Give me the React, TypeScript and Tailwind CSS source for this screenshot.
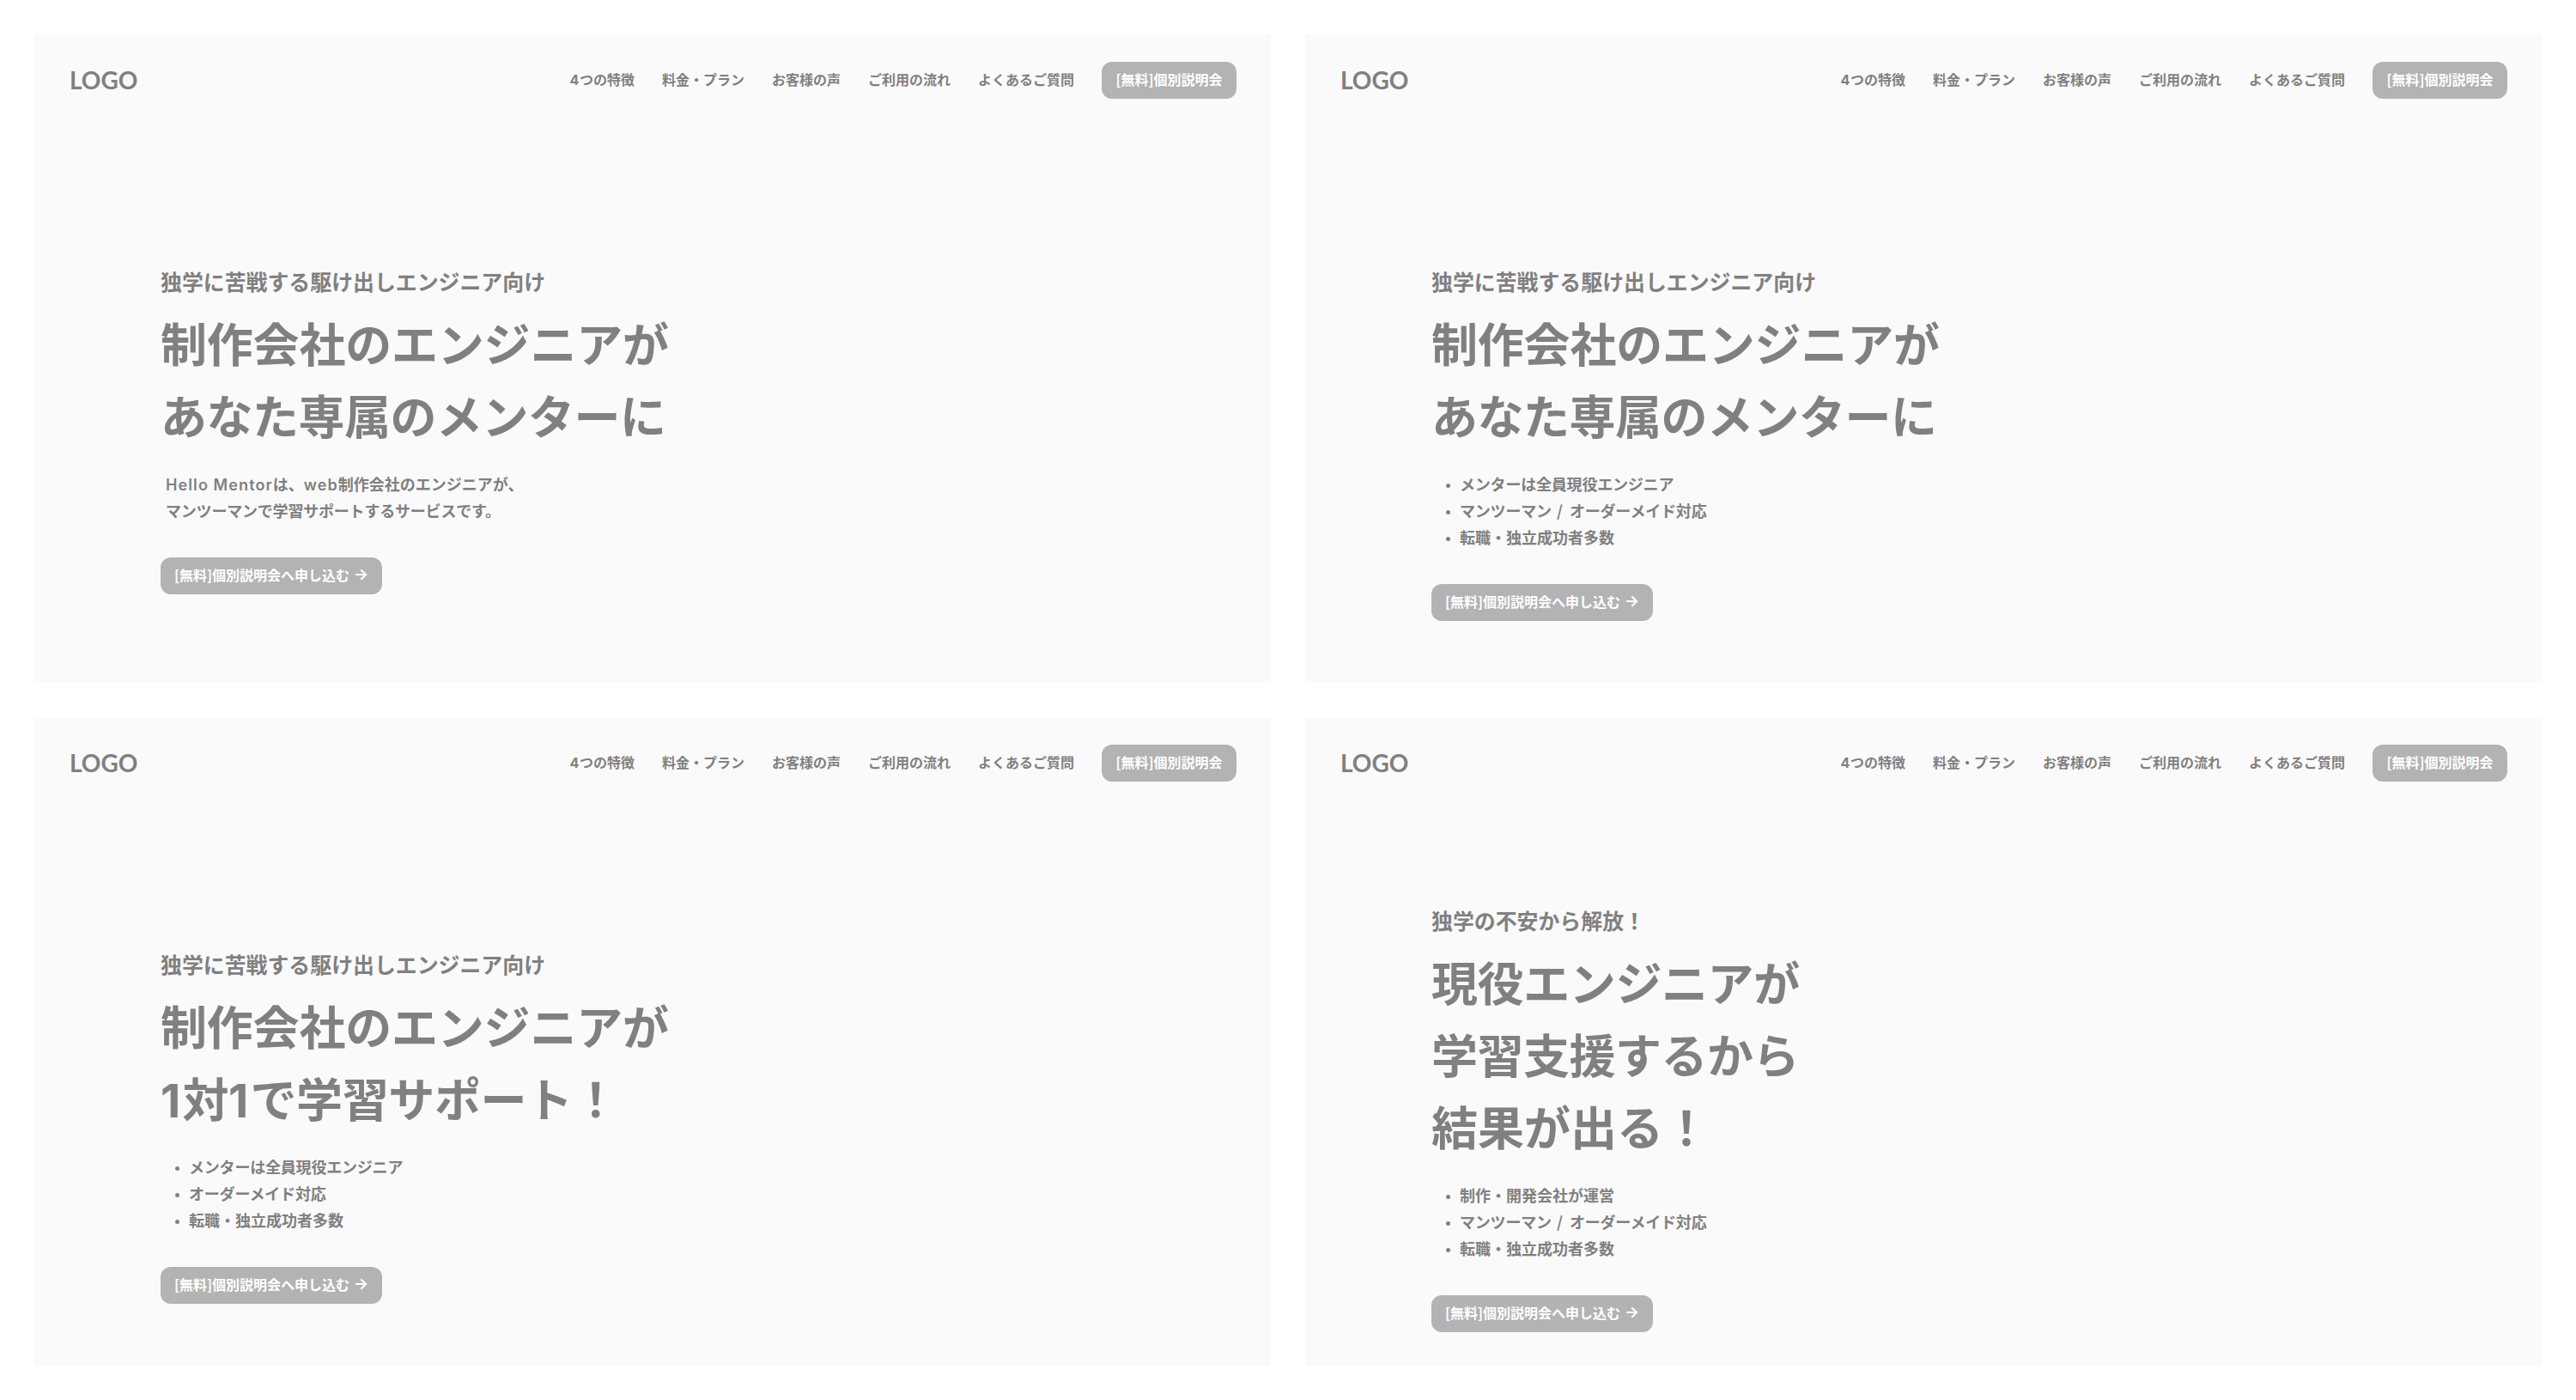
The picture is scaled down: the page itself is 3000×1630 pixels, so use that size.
import { Fragment } from 'react';

interface Line {
    text: string;
    tracking?: string;
}

interface Hero {
    subtitle: string;
    title: Line[];
    lead?: Line[];
    points?: Line[];
    top: string;
    padding: string;
}

const NAV_ITEMS = ['4つの特徴', '料金・プラン', 'お客様の声', 'ご利用の流れ', 'よくあるご質問'];

const HEROES: Hero[] = [
    {
        subtitle: '独学に苦戦する駆け出しエンジニア向け',
        title: [
            { text: '制作会社のエンジニアが', tracking: 'tracking-[-0.2px]' },
            { text: 'あなた専属のメンターに', tracking: 'tracking-[-0.5px]' },
        ],
        lead: [
            { text: 'Hello Mentorは、web制作会社のエンジニアが、' },
            {
                text: 'マンツーマンで学習サポートするサービスです。',
                tracking: 'tracking-[-0.2px]',
            },
        ],
        top: 'pt-8',
        padding: 'pt-[194px]',
    },
    {
        subtitle: '独学に苦戦する駆け出しエンジニア向け',
        title: [
            { text: '制作会社のエンジニアが', tracking: 'tracking-[-0.2px]' },
            { text: 'あなた専属のメンターに', tracking: 'tracking-[-0.5px]' },
        ],
        points: [
            { text: 'メンターは全員現役エンジニア', tracking: 'tracking-[-0.2px]' },
            { text: 'マンツーマン / オーダーメイド対応', tracking: 'tracking-[-0.2px]' },
            { text: '転職・独立成功者多数' },
        ],
        top: 'pt-8',
        padding: 'pt-[194px]',
    },
    {
        subtitle: '独学に苦戦する駆け出しエンジニア向け',
        title: [
            { text: '制作会社のエンジニアが', tracking: 'tracking-[-0.2px]' },
            { text: '1対1で学習サポート！', tracking: 'tracking-[-0.4px]' },
        ],
        points: [
            { text: 'メンターは全員現役エンジニア', tracking: 'tracking-[-0.2px]' },
            { text: 'オーダーメイド対応', tracking: 'tracking-[-0.2px]' },
            { text: '転職・独立成功者多数' },
        ],
        top: 'pt-[31px]',
        padding: 'pt-[194px]',
    },
    {
        subtitle: '独学の不安から解放！',
        title: [
            { text: '現役エンジニアが', tracking: 'tracking-[-0.4px]' },
            { text: '学習支援するから', tracking: 'tracking-[-0.5px]' },
            { text: '結果が出る！' },
        ],
        points: [
            { text: '制作・開発会社が運営' },
            { text: 'マンツーマン / オーダーメイド対応', tracking: 'tracking-[-0.2px]' },
            { text: '転職・独立成功者多数' },
        ],
        top: 'pt-[31px]',
        padding: 'pt-[143px]',
    },
];

// Latin words, digits and slashes get their own face and spacing
function Mixed({ text }: { text: string }) {
    return (
        <>
            {text.split(/([A-Za-z][A-Za-z ]*|\d+| \/ )/).map((part, i) => {
                if (/^[A-Za-z]/.test(part)) {
                    return (
                        <span key={i} className="font-['Inter',sans-serif] font-semibold tracking-[1.1px]">
                            {part}
                        </span>
                    );
                }
                if (/^\d/.test(part)) {
                    return (
                        <span key={i} className="font-['Inter',sans-serif] tracking-[0.04em]">
                            {part}
                        </span>
                    );
                }
                if (part === ' / ') {
                    return (
                        <span key={i} className="tracking-[2px]">
                            {part}
                        </span>
                    );
                }
                return <Fragment key={i}>{part}</Fragment>;
            })}
        </>
    );
}

function Header() {
    return (
        <header className="flex h-[43px] items-start justify-between pr-10 pl-[41px]">
            <div className="font-['Lato','Noto_Sans_CJK_JP',sans-serif] text-[28px] leading-[43px] font-bold">
                LOGO
            </div>
            <nav className="flex h-[43px] items-start gap-8 text-base leading-[41px]">
                {NAV_ITEMS.map((item) => (
                    <a key={item} href="#" className="whitespace-nowrap">
                        <Mixed text={item} />
                    </a>
                ))}
                <a
                    href="#"
                    className="h-[43px] w-[157px] rounded-xl bg-[#b3b3b3] text-center whitespace-nowrap text-white"
                >
                    [無料]個別説明会
                </a>
            </nav>
        </header>
    );
}

function HeroCard({ hero }: { hero: Hero }) {
    return (
        <section className={`h-[755px] w-[1440px] overflow-hidden bg-[#fafafa] ${hero.top}`}>
            <Header />
            <div className={`flex flex-col items-start pl-[147px] ${hero.padding}`}>
                <p className="text-[24.9px] leading-[37px]">{hero.subtitle}</p>
                <h1 className="mt-[11px] text-[54px] leading-[84px] font-bold">
                    {hero.title.map(({ text, tracking = '' }) => (
                        <span key={text} className={`block h-[84px] whitespace-nowrap ${tracking}`}>
                            <Mixed text={text} />
                        </span>
                    ))}
                </h1>
                {hero.lead && (
                    <p className="mt-[23px] pl-1.5 text-lg leading-[31px]">
                        {hero.lead.map(({ text, tracking = '' }) => (
                            <span key={text} className={`block h-[31px] whitespace-nowrap ${tracking}`}>
                                <Mixed text={text} />
                            </span>
                        ))}
                    </p>
                )}
                {hero.points && (
                    <ul className="mt-[23px] pl-[17px] text-lg leading-[31px]">
                        {hero.points.map(({ text, tracking = '' }) => (
                            <li key={text} className="flex h-[31px] items-center gap-[11px]">
                                <span className="mt-1 h-[5px] w-[5px] rounded-full bg-[#808080]" />
                                <span className={`whitespace-pre ${tracking}`}>
                                    <Mixed text={text} />
                                </span>
                            </li>
                        ))}
                    </ul>
                )}
                <a
                    href="#"
                    className="mt-[39px] flex h-[43px] w-[258px] items-center rounded-xl bg-[#b3b3b3] pb-[3px] pl-4 text-base whitespace-nowrap text-white"
                >
                    [無料]個別説明会へ申し込む
                    <span className="ml-[5px] font-['Inter',sans-serif] text-lg">→</span>
                </a>
            </div>
        </section>
    );
}

function App() {
    return (
        <main className="grid h-[1630px] w-[3000px] grid-cols-[1440px_1440px] content-start gap-x-10 gap-y-[41px] bg-white px-10 pt-10 font-['Noto_Sans_CJK_JP',sans-serif] font-bold text-[#808080]">
            {HEROES.map((hero, i) => (
                <HeroCard key={i} hero={hero} />
            ))}
        </main>
    );
}

export default App;
